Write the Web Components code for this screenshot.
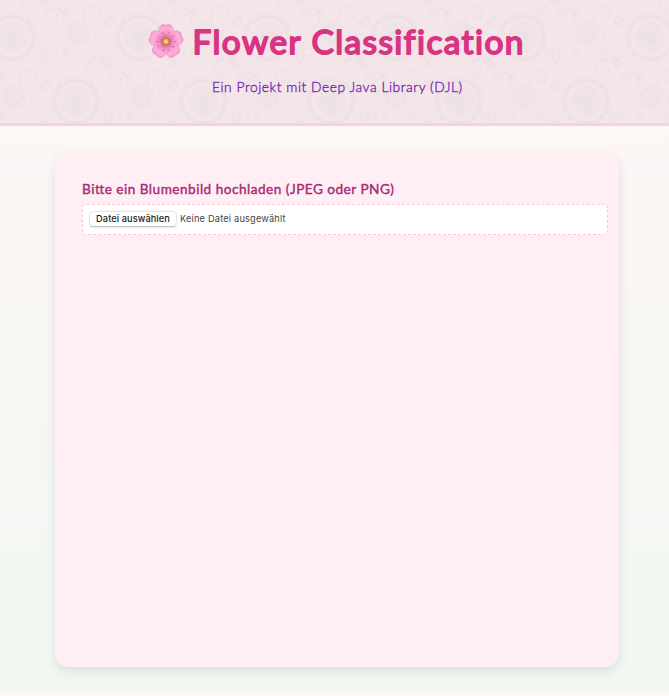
<!DOCTYPE html>
<html lang="de"><head><meta charset="utf-8"><title>Flower Classification</title>
<style>
html{background:#fff5f5}
body{margin:0;height:696px;overflow:hidden;font-family:Lato,"Open Sans",sans-serif;background:linear-gradient(#fff6f6,#f1f8f2) 0 0/100% 694px repeat-y}
</style></head><body>
<flower-page></flower-page>
<script>
const make=(name,html)=>customElements.define(name,class extends HTMLElement{constructor(){super();this.attachShadow({mode:'open'}).innerHTML=html}});
const petals=(n,r1,r2,w)=>Array.from({length:n},(_,i)=>`<ellipse cx="0" cy="${-(r1+r2)/2}" rx="${w}" ry="${(r2-r1)/2}" transform="rotate(${i*360/n})"/>`).join('');
const scallop=(n,r,s)=>Array.from({length:n},(_,i)=>{const a=i*2*Math.PI/n;return `<circle cx="${(r*Math.cos(a)).toFixed(2)}" cy="${(r*Math.sin(a)).toFixed(2)}" r="${s}"/>`}).join('');
make('flower-pattern',`<style>:host{display:block}svg{display:block;width:100%;height:100%}</style>
<svg aria-hidden="true"><defs>
<g id="big"><g fill="#ece1e4">${scallop(16,20,4.6)}<circle r="20"/></g><g fill="#f3e5e8">${scallop(20,18,2.7)}<circle r="18"/></g><g fill="#ece1e4">${petals(20,7,16,.95)}<circle r="7"/></g><circle r="4" fill="none" stroke="#eee2e5" stroke-width=".8"/></g>
<g id="small"><g fill="#ede2e5">${petals(24,8,13,.9)}</g><circle r="8.5" fill="none" stroke="#ece1e4" stroke-width="2.4"/><circle r="5.6" fill="none" stroke="#eee3e6" stroke-width="2"/><circle r="2.4" fill="none" stroke="#e9dee2" stroke-width="1.3"/></g>
<path id="curl" d="M0 0c5-2 8 4 4 7c-4 3-10-1-8-6c2-7 13-7 16 0c3 6 0 13-7 17" fill="none" stroke="#ede1e5" stroke-width="1.4"/>
<path id="leaf" d="M0 8V-8M0-8q-3 3 0 5q3-2 0-5M0-2q-5-5-6-1q2 3 6 3q5-1 6-4q-3-2-6 2M0 4q-5-5-6-1q2 3 6 3q5-1 6-4q-3-2-6 2" fill="#ede1e5" stroke="#ede1e5" stroke-width=".6"/>
<g id="motif"><use href="#big" x="12" y="37.5"/><use href="#small" x="77" y="32.5"/>
<use href="#curl" x="51" y="12"/><use href="#curl" transform="translate(53 49) scale(-.9 .9)"/><use href="#curl" transform="translate(96 11) scale(-1 1)"/><use href="#curl" transform="translate(106 41) rotate(180) scale(.9)"/><use href="#curl" transform="translate(32 12) rotate(200) scale(.9)"/><use href="#curl" transform="translate(38 53) rotate(10) scale(.8)"/><use href="#curl" transform="translate(90 53) scale(.85)"/><use href="#leaf" transform="translate(107 62) rotate(-15) scale(.9)"/><use href="#leaf" transform="translate(109 21) rotate(40) scale(.9)"/><use href="#leaf" transform="translate(66 13) rotate(-40) scale(.5)"/><use href="#leaf" transform="translate(66 51) rotate(40) scale(.5)"/></g>
<pattern id="tile" width="127.6" height="128" patternUnits="userSpaceOnUse"><use href="#motif"/><use href="#motif" x="-127.6"/><use href="#motif" x="127.6"/><use href="#motif" x="63.8" y="64"/><use href="#motif" x="-63.8" y="64"/><use href="#motif" x="63.8" y="-64"/><use href="#motif" x="-63.8" y="-64"/></pattern></defs><rect width="100%" height="100%" fill="url(#tile)"/></svg>`);
make('flower-icon',`<style>:host{display:block;width:36px;height:36px}svg{display:block}</style><svg width="36" height="36" viewBox="-18 -18.5 36 36" aria-hidden="true"><defs><radialGradient id="p" gradientUnits="userSpaceOnUse" cx="0" cy="0" r="18"><stop offset=".12" stop-color="#d95591"/><stop offset=".4" stop-color="#f590c4"/><stop offset=".75" stop-color="#fdb0da"/><stop offset="1" stop-color="#f090c6"/></radialGradient><radialGradient id="y"><stop stop-color="#fff190"/><stop offset=".6" stop-color="#edb83e"/><stop offset="1" stop-color="#b86632"/></radialGradient></defs>
${[0,72,144,216,288].map(a=>`<g transform="rotate(${a})"><path d="M0 0C-4-3-9-8-6.8-13.5C-5.4-17-2-17.8 0-16C2-17.8 5.4-17 6.8-13.5C9-8 4-3 0 0Z" fill="url(#p)" stroke="#ea8cbd" stroke-width=".5"/><path d="M0-3V-8M-1-3L-2.6-7M1-3L2.6-7" stroke="#dc639b" stroke-width=".5"/><circle cx="-3" cy="-8.4" r=".6" fill="#a93268"/><circle cx="2.8" cy="-8.7" r=".5" fill="#b5407b"/></g>`).join('')}<circle r="3.5" fill="url(#y)"/></svg>`);
make('page-header',`<style>:host{display:grid;height:123px;border-bottom:3px solid #f8cfe6;background:#f3e5e8;overflow:hidden}flower-pattern,.content{grid-area:1/1}.content{display:flex;flex-direction:column;align-items:center;z-index:1;padding-top:23px}.title{display:flex;gap:7px;height:36px;margin-left:2px}h1{margin:0;height:44px}svg{display:block;overflow:visible}text{font-variant-ligatures:none}.sub{display:block;margin:19px 0 0 4px;height:20px}</style><flower-pattern></flower-pattern><div class="content"><div class="title"><flower-icon></flower-icon><h1><svg width="332" height="40"><text x="1.5" y="30.5" textLength="331" lengthAdjust="spacing" font-family="Lato" font-size="33.4" font-weight="400" fill="#d93384" stroke="#d93384" stroke-width="1.8" stroke-linejoin="round">Flower Classification</text></svg></h1></div><svg class="sub" width="250" height="20"><text x="0" y="14" textLength="250" lengthAdjust="spacing" font-family="Lato" font-size="13.8" font-weight="300" fill="#7727b5" stroke="#7727b5" stroke-width=".35" stroke-linejoin="round">Ein Projekt mit Deep Java Library (DJL)</text></svg></div>`);
make('file-picker',`<style>:host{display:flex;align-items:center;box-sizing:border-box;width:526px;height:31px;background:#fff;border:1px dashed #fcc5d9;border-radius:5px;padding:0 7px 1.5px;gap:4px;font:9.2px Inter,sans-serif;color:#444}button{box-sizing:border-box;width:86px;height:14px;border:0;border-radius:3.5px;padding:0;background:#fff;box-shadow:0 0 0 .5px #ddd,0 .5px 1.5px #999;color:#222;font:inherit;font-weight:500;white-space:nowrap;letter-spacing:.1px}span{letter-spacing:.2px}</style><button>Datei auswählen</button><span>Keine Datei ausgewählt</span>`);
make('upload-card',`<style>:host{display:block;box-sizing:border-box;width:564px;height:514px;border-radius:14px;background:#ffeff4;box-shadow:0 4px 12px rgba(0,0,0,.1);padding:27px}svg{display:block;overflow:visible;margin-bottom:5px}</style><svg width="313" height="19"><text x="0" y="14" textLength="312" lengthAdjust="spacing" font-family="Lato" font-size="13.6" font-weight="400" fill="#a62b78" stroke="#a62b78" stroke-width=".4" stroke-linejoin="round">Bitte ein Blumenbild hochladen (JPEG oder PNG)</text></svg><slot></slot>`);
make('flower-page',`<style>:host{display:block}upload-card{margin:27px 0 0 55px}</style><page-header></page-header><upload-card><file-picker></file-picker></upload-card>`);
</script></body></html>
